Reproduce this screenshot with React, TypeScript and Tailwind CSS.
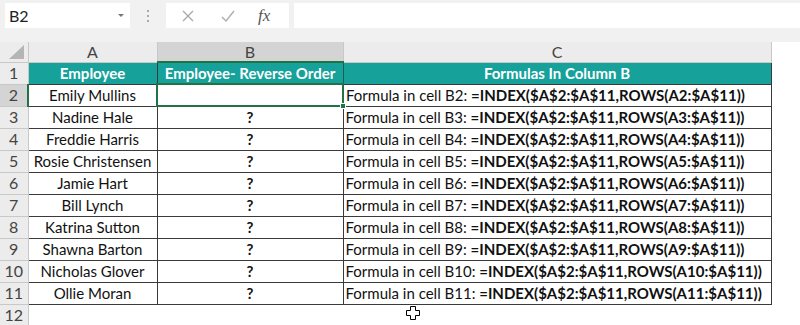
import React from "react";

const rows = [
  { n: 2, name: "Emily Mullins" },
  { n: 3, name: "Nadine Hale" },
  { n: 4, name: "Freddie Harris" },
  { n: 5, name: "Rosie Christensen" },
  { n: 6, name: "Jamie Hart" },
  { n: 7, name: "Bill Lynch" },
  { n: 8, name: "Katrina Sutton" },
  { n: 9, name: "Shawna Barton" },
  { n: 10, name: "Nicholas Glover" },
  { n: 11, name: "Ollie Moran" },
];

const font = { fontFamily: "Lato, 'Open Sans', sans-serif" };

function FormulaBar() {
  return (
    <div className="flex h-[42px] items-start bg-[#f1f1f1] pt-[3px]">
      <div className="ml-[5px] flex h-[25px] w-[125px] items-center justify-between bg-white pl-[4px] pr-[6px] text-[16px] text-[#222]">
        <span>B2</span>
        <span className="h-0 w-0 border-x-[3px] border-t-[3px] border-x-transparent border-t-[#777]" />
      </div>
      <div className="flex h-[25px] w-[36px] flex-col items-center justify-center gap-[3px]">
        <span className="h-[2px] w-[2px] bg-[#aaa]" />
        <span className="h-[2px] w-[2px] bg-[#aaa]" />
        <span className="h-[2px] w-[2px] bg-[#aaa]" />
      </div>
      <div className="flex h-[25px] w-[123px] items-center bg-white text-[#9a9a9a]">
        <svg width="14" height="14" viewBox="0 0 14 14" className="ml-[15px]">
          <path d="M2 2 L12 12 M12 2 L2 12" stroke="#a8a8a8" strokeWidth="1.3" fill="none" />
        </svg>
        <svg width="16" height="14" viewBox="0 0 16 14" className="ml-[25px]">
          <path d="M2 8 L6 12 L14 2" stroke="#b0b0b0" strokeWidth="1.5" fill="none" />
        </svg>
        <span
          className="ml-[22px] text-[17px] italic text-[#555]"
          style={{ fontFamily: "'Liberation Serif', serif" }}
        >
          fx
        </span>
      </div>
      <div className="ml-[5px] h-[25px] flex-1 bg-white" />
    </div>
  );
}

const rowHead =
  "h-[22px] border-r border-b border-[#c8c8c8] bg-[#ececec] p-0 text-center text-[16px] text-[#444]";

export default function App() {
  return (
    <div className="relative h-[325px] w-[800px] overflow-hidden bg-white" style={font}>
      <FormulaBar />
      <table className="table-fixed border-collapse text-[15px] leading-[18px] text-[#111]">
        <colgroup>
          <col className="w-[28px]" />
          <col className="w-[129px]" />
          <col className="w-[186px]" />
          <col className="w-[428px]" />
          <col className="w-[29px]" />
        </colgroup>
        <thead>
          <tr className="text-[16px] font-normal text-[#444]">
            <th className="relative h-[20px] border-r border-b border-[#c8c8c8] bg-[#ececec] p-0">
              <svg width="20" height="16" viewBox="0 0 20 16" className="absolute bottom-[2px] right-[2px]">
                <path d="M18 1 L18 15 L3 15 Z" fill="#b5b5b5" />
              </svg>
            </th>
            <th className="h-[20px] border-r border-b border-[#c8c8c8] bg-[#ececec] p-0 font-normal">A</th>
            <th className="h-[20px] border-r border-b-2 border-[#c8c8c8] border-b-[#217346] bg-[#d4d4d4] p-0 font-normal">B</th>
            <th className="h-[20px] border-r border-b border-[#c8c8c8] bg-[#ececec] p-0 font-normal">C</th>
            <th className="h-[20px] bg-white p-0" />
          </tr>
        </thead>
        <tbody>
          <tr>
            <td className={rowHead}>1</td>
            <td className="border border-[#3a3a3a] bg-[#17a19b] p-0 text-center font-bold text-white">Employee</td>
            <td className="border border-[#1f5f52] bg-[#17a19b] p-0 text-center font-bold text-white">Employee- Reverse Order</td>
            <td className="border border-[#3a3a3a] bg-[#17a19b] p-0 text-center font-bold text-white">Formulas In Column B</td>
            <td className="p-0" />
          </tr>
          {rows.map((r) => (
            <tr key={r.n}>
              <td
                className={
                  r.n === 2
                    ? "h-[22px] border-r-2 border-b border-[#c8c8c8] border-r-[#217346] bg-[#d4d4d4] p-0 text-center text-[16px] text-[#444]"
                    : rowHead
                }
              >
                {r.n}
              </td>
              <td className="border border-[#3a3a3a] p-0 text-center whitespace-nowrap">{r.name}</td>
              {r.n === 2 ? (
                <td className="relative border-2 border-[#217346] p-0">
                  <span className="absolute -bottom-[4px] -right-[4px] h-[6px] w-[6px] border border-white bg-[#217346]" />
                </td>
              ) : (
                <td className="border border-[#3a3a3a] p-0 text-center font-bold">?</td>
              )}
              <td className="border border-[#3a3a3a] p-0 pl-[2px] whitespace-nowrap">
                Formula in cell B{r.n}:{" "}
                <span className="font-bold">
                  =INDEX($A$2:$A$11,ROWS(A{r.n}:$A$11))
                </span>
              </td>
              <td className="p-0" />
            </tr>
          ))}
          <tr>
            <td className="h-[21px] border-r border-[#c8c8c8] bg-[#ececec] p-0 text-center text-[16px] text-[#444]">12</td>
            <td className="p-0" />
            <td className="p-0" />
            <td className="p-0" />
            <td className="p-0" />
          </tr>
        </tbody>
      </table>
      <svg
        width="16"
        height="16"
        viewBox="0 0 16 16"
        className="absolute left-[405px] top-[305px]"
      >
        <path
          d="M5.5 1.5 H10.5 V5.5 H14.5 V10.5 H10.5 V14.5 H5.5 V10.5 H1.5 V5.5 H5.5 Z"
          fill="white"
          stroke="black"
          strokeWidth="1"
        />
      </svg>
    </div>
  );
}
